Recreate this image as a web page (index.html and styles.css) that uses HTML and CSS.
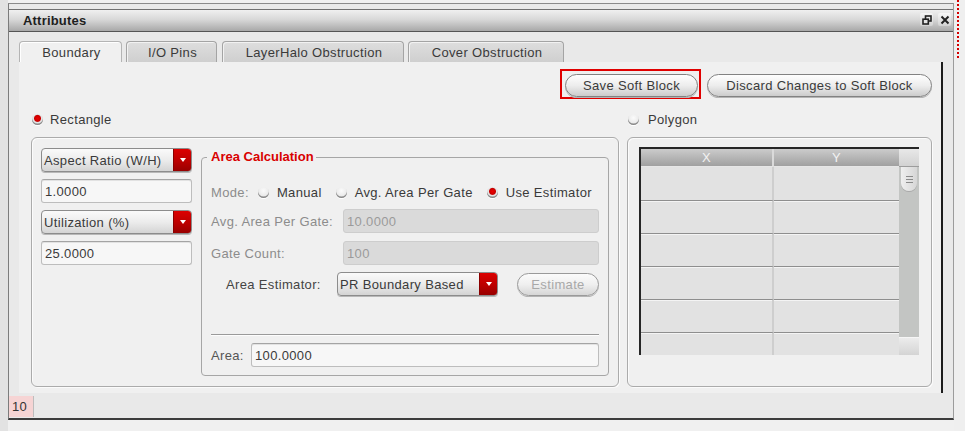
FILE: index.html
```html
<!DOCTYPE html>
<html>
<head>
<meta charset="utf-8">
<title>Attributes</title>
<link rel="stylesheet" href="styles.css">
</head>
<body>
<div class="screen">
  <div class="window">
    <div class="titlebar">
      <span class="title">Attributes</span>
      <div class="tb-btns">
        <span class="tb-btn"><svg width="10" height="10" viewBox="0 0 10 10"><rect x="3.5" y="1" width="5.5" height="5" fill="none" stroke="#222" stroke-width="1.6"/><rect x="1" y="4.2" width="5.3" height="4.8" fill="#e4e4e4" stroke="#222" stroke-width="1.6"/></svg></span>
        <span class="tb-btn"><svg width="10" height="10" viewBox="0 0 10 10"><path d="M1.5 1.5 L8.5 8.5 M8.5 1.5 L1.5 8.5" stroke="#222" stroke-width="2"/></svg></span>
      </div>
    </div>
    <div class="content">
      <div class="tabs">
        <div class="tab active t1">Boundary</div>
        <div class="tab t2">I/O Pins</div>
        <div class="tab t3">LayerHalo Obstruction</div>
        <div class="tab t4">Cover Obstruction</div>
      </div>
      <div class="panel">
        <div class="actions">
          <div class="highlight"><div class="pill save">Save Soft Block</div></div>
          <div class="pill discard">Discard Changes to Soft Block</div>
        </div>
        <div class="main">
          <div class="col">
            <div class="radio-row"><span class="radio on"></span><span>Rectangle</span></div>
            <div class="group lgroup">
              <div class="side">
                <div class="select"><span class="stxt">Aspect Ratio (W/H)</span><span class="sarrow"><i></i></span></div>
                <div class="field">1.0000</div>
                <div class="select"><span class="stxt">Utilization (%)</span><span class="sarrow"><i></i></span></div>
                <div class="field">25.0000</div>
              </div>
              <fieldset class="calcbox">
                <legend>Area Calculation</legend>
                <div class="calc">
                  <div class="mode">
                    <span class="dim">Mode:</span>
                    <span class="opt first"><span class="radio"></span><span>Manual</span></span>
                    <span class="opt"><span class="radio"></span><span>Avg. Area Per Gate</span></span>
                    <span class="opt"><span class="radio on"></span><span>Use Estimator</span></span>
                  </div>
                  <div class="frow">
                    <span class="k dim">Avg. Area Per Gate:</span>
                    <div class="field disabled">10.0000</div>
                  </div>
                  <div class="frow gap">
                    <span class="k dim">Gate Count:</span>
                    <div class="field disabled">100</div>
                  </div>
                  <div class="frow est">
                    <span class="k2">Area Estimator:</span>
                    <div class="select wide"><span class="stxt">PR Boundary Based</span><span class="sarrow"><i></i></span></div>
                    <div class="pill estimate">Estimate</div>
                  </div>
                  <div class="sep"></div>
                  <div class="frow arow">
                    <span class="k3">Area:</span>
                    <div class="field">100.0000</div>
                  </div>
                </div>
              </fieldset>
            </div>
          </div>
          <div class="col">
            <div class="radio-row poly"><span class="radio"></span><span>Polygon</span></div>
            <div class="group rgroup">
              <div class="ptable">
                <div class="pgrid">
                  <div class="th c1">X</div><div class="th">Y</div>
                  <div class="td c1"></div><div class="td"></div>
                  <div class="td c1 line"></div><div class="td line"></div>
                  <div class="td c1 line"></div><div class="td line"></div>
                  <div class="td c1 line"></div><div class="td line"></div>
                  <div class="td c1 line"></div><div class="td line"></div>
                  <div class="td c1 line"></div><div class="td line"></div>
                </div>
                <div class="vscroll">
                  <div class="sc-head"></div>
                  <div class="sc-thumb"><span class="grip"></span></div>
                  <div class="sc-track"></div>
                  <div class="sc-foot"></div>
                </div>
              </div>
            </div>
          </div>
        </div>
      </div>
    </div>
    <div class="status"><span class="badge">10</span></div>
  </div>
  <div class="edge"><div class="dots"></div></div>
</div>
</body>
</html>
```

FILE: styles.css
```css
* { box-sizing: border-box; }

body {
  margin: 0;
  background: #eeeeee;
  font-family: "Liberation Sans", Arial, sans-serif;
  font-size: 13px;
  letter-spacing: 0.35px;
  color: #3a3a3a;
}

.screen {
  width: 965px;
  height: 431px;
  display: flex;
  overflow: hidden;
  background: linear-gradient(90deg, #e2e2e2 0 8px, #f0f0f0 8px);
}

.window {
  margin: 3px 0 0 8px;
  width: 946px;
  height: 417px;
  border-left: 1px solid #7c7c7c;
  border-top: 1px solid #8a8a8a;
  border-right: 1px solid #9c9c9c;
  border-bottom: 2px solid #3c3c3c;
  background: #e9e9e9;
  padding-top: 5px;
  display: flex;
  flex-direction: column;
}

.titlebar {
  height: 23px;
  border-top: 1px solid #707070;
  border-bottom: 1px solid #555;
  background: linear-gradient(#f0f0f0, #d8d8d8 45%, #a8a8a8);
  display: flex;
  align-items: center;
  justify-content: space-between;
  padding: 0 2px 0 14px;
}

.title {
  font-weight: bold;
  color: #1e1e1e;
  letter-spacing: 0.2px;
}

.tb-btns {
  display: flex;
  gap: 5px;
  margin-bottom: 2px;
}

.tb-btn {
  width: 13px;
  height: 13px;
  border-radius: 2px;
  background: linear-gradient(#f6f6f6, #d2d2d2);
  display: flex;
  align-items: center;
  justify-content: center;
}

.content {
  padding: 9px 10px 0 10px;
}

.tabs {
  display: flex;
  height: 21px;
}

.tab {
  height: 21px;
  border: 1px solid #a4a4a4;
  border-bottom: none;
  border-radius: 4px 4px 0 0;
  background: linear-gradient(#dedede, #cfcfcf);
  box-shadow: inset 1px 1px 0 #f2f2f2;
  display: flex;
  align-items: center;
  justify-content: center;
  color: #3a3a3a;
  padding-left: 2px;
}

.tab.active {
  background: #f0f0f0;
  border-color: #b4b4b4;
  box-shadow: inset 1px 1px 0 #fff;
}

.t1 { width: 103px; margin-right: 4px; }
.t2 { width: 91px; margin-right: 5px; }
.t3 { width: 182px; margin-right: 4px; }
.t4 { width: 156px; }

.panel {
  height: 331px;
  background: #f0f0f0;
  border-right: 2px solid #1c1c1c;
  padding: 7px 9px 0 12px;
  display: flex;
  flex-direction: column;
}

.actions {
  display: flex;
  justify-content: flex-end;
  align-items: flex-start;
  gap: 6px;
  height: 31px;
}

.highlight {
  border: 2px solid #e00000;
  padding: 3px 1px 0 3px;
  height: 30px;
}

.pill {
  height: 23px;
  border: 1px solid #828282;
  border-radius: 12px;
  background: linear-gradient(#fefefe, #ededed 50%, #cccccc);
  box-shadow: 0 1px 0 #b4b4b4;
  display: flex;
  align-items: center;
  justify-content: center;
  color: #3a3a3a;
}

.save { width: 133px; }
.discard { width: 225px; margin-top: 5px; }

.main {
  display: grid;
  grid-template-columns: 588px 305px;
  column-gap: 8px;
}

.col {
  display: flex;
  flex-direction: column;
}

.radio-row {
  height: 18px;
  margin-top: 10px;
  display: flex;
  align-items: center;
  gap: 7px;
  padding-left: 1px;
}

.radio-row.poly {
  gap: 9px;
}

.radio {
  flex: none;
  width: 11px;
  height: 11px;
  border-radius: 50%;
  background: radial-gradient(circle at 50% 35%, #fbfbfb, #dedede);
  box-shadow: inset 0 -1.5px 0 #8a8a8a, 0 1px 0 #fff;
}

.radio.on {
  background: radial-gradient(circle at 50% 40%, #ee0000 0, #c80000 3px, #e4e4e4 4px);
}

.group {
  margin-top: 9px;
  height: 250px;
  border: 1px solid #ababab;
  border-radius: 6px;
  box-shadow: inset 1px 1px 0 #fbfbfb, 1px 1px 0 #fbfbfb;
}

.lgroup {
  display: flex;
  align-items: flex-start;
  padding: 10px 9px;
}

.side {
  width: 151px;
  display: flex;
  flex-direction: column;
  gap: 7px;
}

.select {
  height: 24px;
  display: flex;
  border: 1px solid #8c8c8c;
  border-radius: 4px;
  background: linear-gradient(#fafafa, #ececec 50%, #d4d4d4);
  box-shadow: 0 1px 0 #b8b8b8;
  overflow: hidden;
}

.stxt {
  flex: 1;
  display: flex;
  align-items: center;
  padding-left: 2px;
  color: #3a3a3a;
  white-space: nowrap;
}

.sarrow {
  width: 18px;
  background: linear-gradient(#dc0000, #b80000 60%, #980000);
  border-left: 1px solid #8a0000;
  display: flex;
  align-items: center;
  justify-content: center;
}

.sarrow i {
  width: 0;
  height: 0;
  border-left: 3.5px solid transparent;
  border-right: 3.5px solid transparent;
  border-top: 4px solid #fff;
}

.field {
  height: 24px;
  display: flex;
  align-items: center;
  padding-left: 3px;
  border: 1px solid #bdbdbd;
  border-top-color: #a4a4a4;
  border-radius: 3px;
  background: #f7f7f7;
  box-shadow: inset 0 1px 0 #e2e2e2;
  color: #3a3a3a;
}

.field.disabled {
  background: #dadada;
  border-color: #cdcdcd;
  box-shadow: none;
  color: #9a9a9a;
}

.calcbox {
  margin: 1px 0 0 9px;
  width: 408px;
  min-width: 0;
  border: 1px solid #a6a6a6;
  border-radius: 4px;
  padding: 0;
}

.calcbox legend {
  margin-left: 5px;
  padding: 0 2px 0 4px;
  font-weight: bold;
  color: #d80000;
  line-height: 16px;
  letter-spacing: 0;
}

.calc {
  padding: 18px 9px 8px 9px;
  display: flex;
  flex-direction: column;
}

.dim { color: #8c8c8c; }

.mode {
  height: 18px;
  display: flex;
  align-items: center;
  margin-bottom: 8px;
}

.opt {
  display: flex;
  align-items: center;
  gap: 8px;
  margin-left: 14px;
  color: #3a3a3a;
}

.opt.first { margin-left: 9px; }

.frow {
  height: 24px;
  display: flex;
  align-items: center;
}

.frow .field { flex: 1; }

.frow.gap { margin-top: 8px; }

.frow.est {
  margin-top: 7px;
  padding-left: 15px;
}

.k { width: 132px; flex: none; }
.k2 { width: 111px; flex: none; color: #444; }
.k3 { width: 40px; flex: none; color: #555; }

.select.wide { width: 161px; }

.pill.estimate {
  width: 82px;
  margin-left: auto;
  color: #a8a8a8;
  background: linear-gradient(#fbfbfb, #efefef 50%, #d6d6d6);
  border-color: #9a9a9a;
}

.sep {
  margin-top: 38px;
  height: 2px;
  border-top: 1px solid #9a9a9a;
  border-bottom: 1px solid #fdfdfd;
}

.frow.arow { margin-top: 7px; }

.rgroup {
  padding: 9px 12px 0 11px;
}

.ptable {
  display: flex;
  height: 208px;
  border-top: 2px solid #262626;
  border-left: 2px solid #262626;
}

.pgrid {
  flex: 1;
  display: grid;
  grid-template-columns: 133px 1fr;
  grid-template-rows: 18px repeat(5, 33px) 23px;
}

.th {
  background: linear-gradient(#cbcbcb, #a0a0a0);
  color: #f2f2f2;
  display: flex;
  align-items: center;
  justify-content: center;
  border-bottom: 1px solid #e6e6e6;
}

.th.c1 { border-right: 2px solid #dadada; }

.td { background: #e2e2e2; }
.td.c1 { border-right: 2px solid #cecece; }

.td.line {
  border-top: 1px solid #8e8e8e;
  box-shadow: inset 0 1px 0 #f4f4f4;
}

.vscroll {
  width: 20px;
  display: flex;
  flex-direction: column;
  background: #c3c5c3;
}

.sc-head {
  height: 18px;
  background: linear-gradient(#e8e8e8, #d2d2d2);
  border-bottom: 1px solid #9c9c9c;
}

.sc-thumb {
  height: 24px;
  margin: 0 2px;
  border-radius: 0 0 8px 8px;
  background: linear-gradient(90deg, #efefef, #d6d6d6);
  box-shadow: 0 1px 0 #a8a8a8;
  display: flex;
  align-items: center;
  justify-content: center;
}

.grip {
  width: 7px;
  height: 7px;
  background: repeating-linear-gradient(#8a8a8a 0 1px, transparent 1px 3px);
}

.sc-track { flex: 1; }

.sc-foot {
  height: 18px;
  background: linear-gradient(#ececec, #d4d4d4);
  border-top: 1px solid #f6f6f6;
}

.status {
  height: 24px;
  padding-top: 3px;
  display: flex;
}

.badge {
  width: 25px;
  height: 21px;
  display: flex;
  align-items: center;
  padding-left: 3px;
  background: #f6d4d4;
  border-right: 1px solid #bdbdbd;
  color: #333;
}

.edge {
  flex: 1;
  background: #efefef;
}

.dots {
  margin-left: 3px;
  width: 2px;
  height: 60px;
  background: repeating-linear-gradient(#d40000 0 2px, transparent 2px 4px);
}
```
